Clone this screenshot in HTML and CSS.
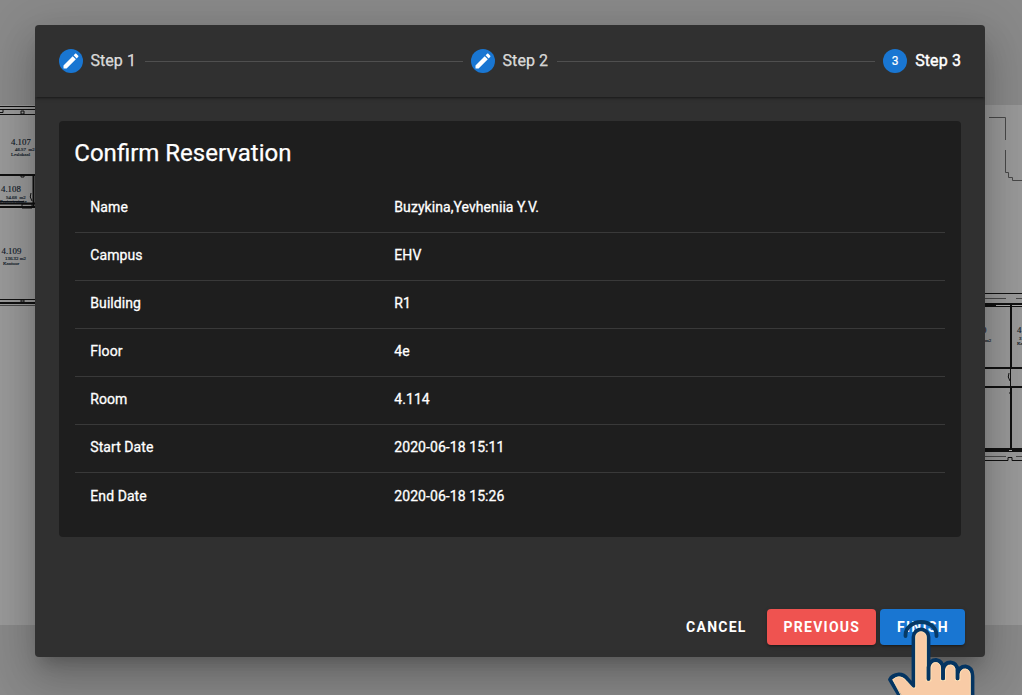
FILE: index.html
```html
<!DOCTYPE html>
<html lang="en">
<head>
<meta charset="utf-8">
<title>Confirm Reservation</title>
<link rel="stylesheet" href="styles.css">
</head>
<body>
<svg class="floorplan" width="1022" height="695" viewBox="0 0 1022 695" aria-hidden="true">
  <rect class="sheet" x="0" y="105" width="1022" height="520"/>
  <g class="walls">
    <path d="M0 106.5H40M0 109.5H40M0 114.5H40M0 299.5H40" stroke-width="1"/>
    <path d="M0 175H35M33.5 175V208M0 203.5H35M0 207H35M0 303H40" stroke-width="2"/>
    <path d="M0 112.500H3V110M21 111h3v3h-3zM21 175h3v2h-3zM21 300h3v2h-3zM22 204h10v4h-10zM31 193q-2 4 1 8M0 201.500H24" stroke-width="1"/>
    <path d="M980 293.500H1022M989 305.500H1022" stroke-width="1"/>
    <path d="M980 305H1022M980 450H1022" stroke-width="4"/>
    <path d="M1011 307V368M1011 388V449M980 368H1022M980 387H1022" stroke-width="2"/>
    <path d="M1010.500 369V386M1009 373q-2 4 1 8M1009 393h3M980 460.500H1008V457.500H1012V460.500H1022" stroke-width="1"/>
  </g>
  <path class="gap" d="M996 305.500H1010M1012 305.500H1022M1009 450.500H1012"/>
  <g class="outline">
    <path d="M989 117.500H1005.500V140M1005.500 150V172.500H1008.500V177.500H1012.500V180.500H1022"/>
    <path d="M980 298.500H1006M1016 298.500H1022M980 456.500H1006M1016 456.500H1022M0 305.500H35"/>
  </g>
  <g class="room">
    <text x="11" y="145">4.107</text><text x="1" y="192">4.108</text><text x="1.500" y="254">4.109</text>
    <text x="982" y="333">0</text><text x="1017" y="333">4</text>
  </g>
  <g class="room-info">
    <text x="15" y="150.500">46.57 &#160;m2</text><text x="11" y="155.500">Leslokaal</text>
    <text x="6" y="198.500">54.68 &#160;m2</text><text x="0" y="203">Projectruimte</text>
    <text x="5" y="259.500">136.32 m2</text><text x="3" y="264.500">Kantoor</text>
    <text x="985" y="342">m2</text><text x="1019" y="340">3</text><text x="1017" y="345">Ka</text>
  </g>
</svg>

<main class="dialog">
  <header class="stepper">
    <div class="step">
      <span class="badge"><svg width="20" height="20" viewBox="0 0 24 24"><path d="M20.710 7.040c.390-.390.390-1.040 0-1.410l-2.340-2.340c-.370-.390-1.020-.390-1.410 0l-1.840 1.830 3.750 3.750M3 17.250V21h3.750L17.810 9.930l-3.750-3.750L3 17.250z"/></svg></span>
      <span class="step-label">Step 1</span>
    </div>
    <hr class="connector">
    <div class="step">
      <span class="badge"><svg width="20" height="20" viewBox="0 0 24 24"><path d="M20.710 7.040c.390-.390.390-1.040 0-1.410l-2.340-2.340c-.370-.390-1.020-.390-1.410 0l-1.840 1.830 3.750 3.750M3 17.250V21h3.750L17.810 9.930l-3.750-3.750L3 17.250z"/></svg></span>
      <span class="step-label">Step 2</span>
    </div>
    <hr class="connector">
    <div class="step active">
      <span class="badge">3</span>
      <span class="step-label">Step 3</span>
    </div>
  </header>

  <section class="card">
    <h1 class="title">Confirm Reservation</h1>
    <dl class="details">
      <div class="row"><dt>Name</dt><dd>Buzykina,Yevheniia Y.V.</dd></div>
      <div class="row"><dt>Campus</dt><dd>EHV</dd></div>
      <div class="row"><dt>Building</dt><dd>R1</dd></div>
      <div class="row"><dt>Floor</dt><dd>4e</dd></div>
      <div class="row"><dt>Room</dt><dd>4.114</dd></div>
      <div class="row"><dt>Start Date</dt><dd>2020-06-18 15:11</dd></div>
      <div class="row"><dt>End Date</dt><dd>2020-06-18 15:26</dd></div>
    </dl>
  </section>

  <footer class="actions">
    <button class="btn cancel">CANCEL</button>
    <button class="btn previous">PREVIOUS</button>
    <button class="btn finish">FINISH</button>
  </footer>
</main>

<svg class="pointer" width="100" height="80" viewBox="880 615 100 80" aria-hidden="true">
  <path class="tap" d="M905.500 636v-1a15.500 13 0 0 1 31 0v1"/>
  <path class="hand" d="M913.500 686V637a7.500 7.500 0 0 1 15 0V679V667Q930 660 936 660Q943 661 943 669V678.500V670Q944 662.500 950.500 662.500Q957.500 663 957.500 671V678.500V674Q959 666.500 965.500 666.500Q972.500 667.500 972.500 676V705H905L890 679.500Q892 675.500 899 674.500Q904 674.500 907.500 679Z"/>
  <path class="glow" d="M915.700 688V637a5.300 5.300 0 0 1 10.600 0V681H931V668Q932 662.500 936 662.500Q940.700 663 940.700 669V680.500H945.500V670Q947 665 950.500 665Q955.300 665.500 955.300 671V680.500H960V674Q961 669 965.500 669Q970.300 670 970.300 676V705H906L893 680Q895 677 899 676.700Q903 677 906 680.500L913 688Z"/>
  <path class="creases" d="M928.500 667V679M943 668V678.500M957.500 670V678.500"/>
</svg>
</body>
</html>
```
FILE: styles.css
```css
* { box-sizing: border-box; }

body {
  margin: 0;
  height: 695px;
  overflow: hidden;
  position: relative;
  background: #898989;
  font-family: Roboto, sans-serif;
  color: #fff;
}

.floorplan { position: absolute; left: 0; top: 0; }
.sheet { fill: #999; }
.walls { fill: none; stroke: #111; }
.gap { fill: none; stroke: #aaa; }
.outline { fill: none; stroke: #484848; }
.room, .room-info { font-family: "Liberation Serif", serif; fill: #101a28; stroke: #101a28; stroke-width: .15px; }
.room { font-size: 8.800px; }
.room-info { font-size: 4.900px; }

.dialog {
  position: relative;
  width: 950px;
  height: 632px;
  margin: 25px 0 0 35px;
  display: flex;
  flex-direction: column;
  border-radius: 4px;
  background: #303030;
  box-shadow: 0 11px 15px -7px rgba(0,0,0,.2), 0 24px 38px 3px rgba(0,0,0,.14), 0 9px 46px 8px rgba(0,0,0,.12);
}

.stepper {
  height: 72px;
  padding: 0 24px;
  display: flex;
  align-items: center;
  border-radius: 4px 4px 0 0;
  box-shadow: 0 3px 1px -2px rgba(0,0,0,.2), 0 2px 2px 0 rgba(0,0,0,.14), 0 1px 5px 0 rgba(0,0,0,.12);
  clip-path: inset(0 0 -10px 0);
}
.step { display: flex; align-items: center; gap: 7.500px; color: rgba(255,255,255,.8); }
.step.active { color: #fff; gap: 8px; }
.badge {
  width: 24px;
  height: 24px;
  display: flex;
  align-items: center;
  justify-content: center;
  border-radius: 50%;
  background: #1976d2;
  font-size: 12px;
  color: #fff;
  -webkit-text-stroke: .2px currentColor;
}
.badge svg { fill: #fff; }
.step-label { font-size: 16px; line-height: 16px; letter-spacing: .05px; -webkit-text-stroke: .25px currentColor; }
.active .step-label { letter-spacing: .12px; -webkit-text-stroke-width: .4px; }
.connector { flex: 1; height: 1px; margin: 0 8px 0 9px; border: 0; background: #4f4f4f; }

.card {
  height: 416px;
  margin: 24px 24px 0;
  padding: 16px;
  border-radius: 4px;
  background: #1e1e1e;
}
.title { margin: 0 0 0 -.7px; font-size: 24px; font-weight: 400; line-height: 32px; -webkit-text-stroke: .25px currentColor; }
.details { margin: 16px 0 0; font-size: 14px; letter-spacing: .07px; -webkit-text-stroke: .3px currentColor; }
.row {
  height: 48px;
  padding: 0 15.300px 4px;
  display: grid;
  grid-template-columns: 304px 1fr;
  align-items: center;
  border-bottom: 1px solid #393939;
}
.row:last-child { padding-bottom: 2px; border-bottom: 0; }
.row dt, .row dd { margin: 0; }

.actions { margin-top: auto; height: 60px; padding: 12px 20px 12px 0; display: flex; justify-content: flex-end; }
.btn {
  height: 36px;
  padding: 0;
  text-indent: .8px;
  border: 0;
  border-radius: 4px;
  background: none;
  color: #fff;
  font: 700 14px Roboto, sans-serif;
  letter-spacing: 1.250px;
}
.cancel { width: 94px; margin-right: 4px; }
.previous, .finish { box-shadow: 0 3px 1px -2px rgba(0,0,0,.2), 0 2px 2px 0 rgba(0,0,0,.14), 0 1px 5px 0 rgba(0,0,0,.12); }
.previous { width: 109px; margin-right: 4px; background: #ef5350; }
.finish { width: 85px; background: #1976d2; }

.pointer { position: absolute; left: 880px; top: 615px; }
.tap { fill: none; stroke: #073a66; stroke-width: 3.800; stroke-linecap: round; }
.hand { fill: #f8cba6; stroke: #043461; stroke-width: 3.800; stroke-linejoin: round; }
.glow { fill: none; stroke: #ffe5b8; stroke-width: .8; }
.creases { fill: none; stroke: #043461; stroke-width: 3.600; stroke-linecap: round; }
```
